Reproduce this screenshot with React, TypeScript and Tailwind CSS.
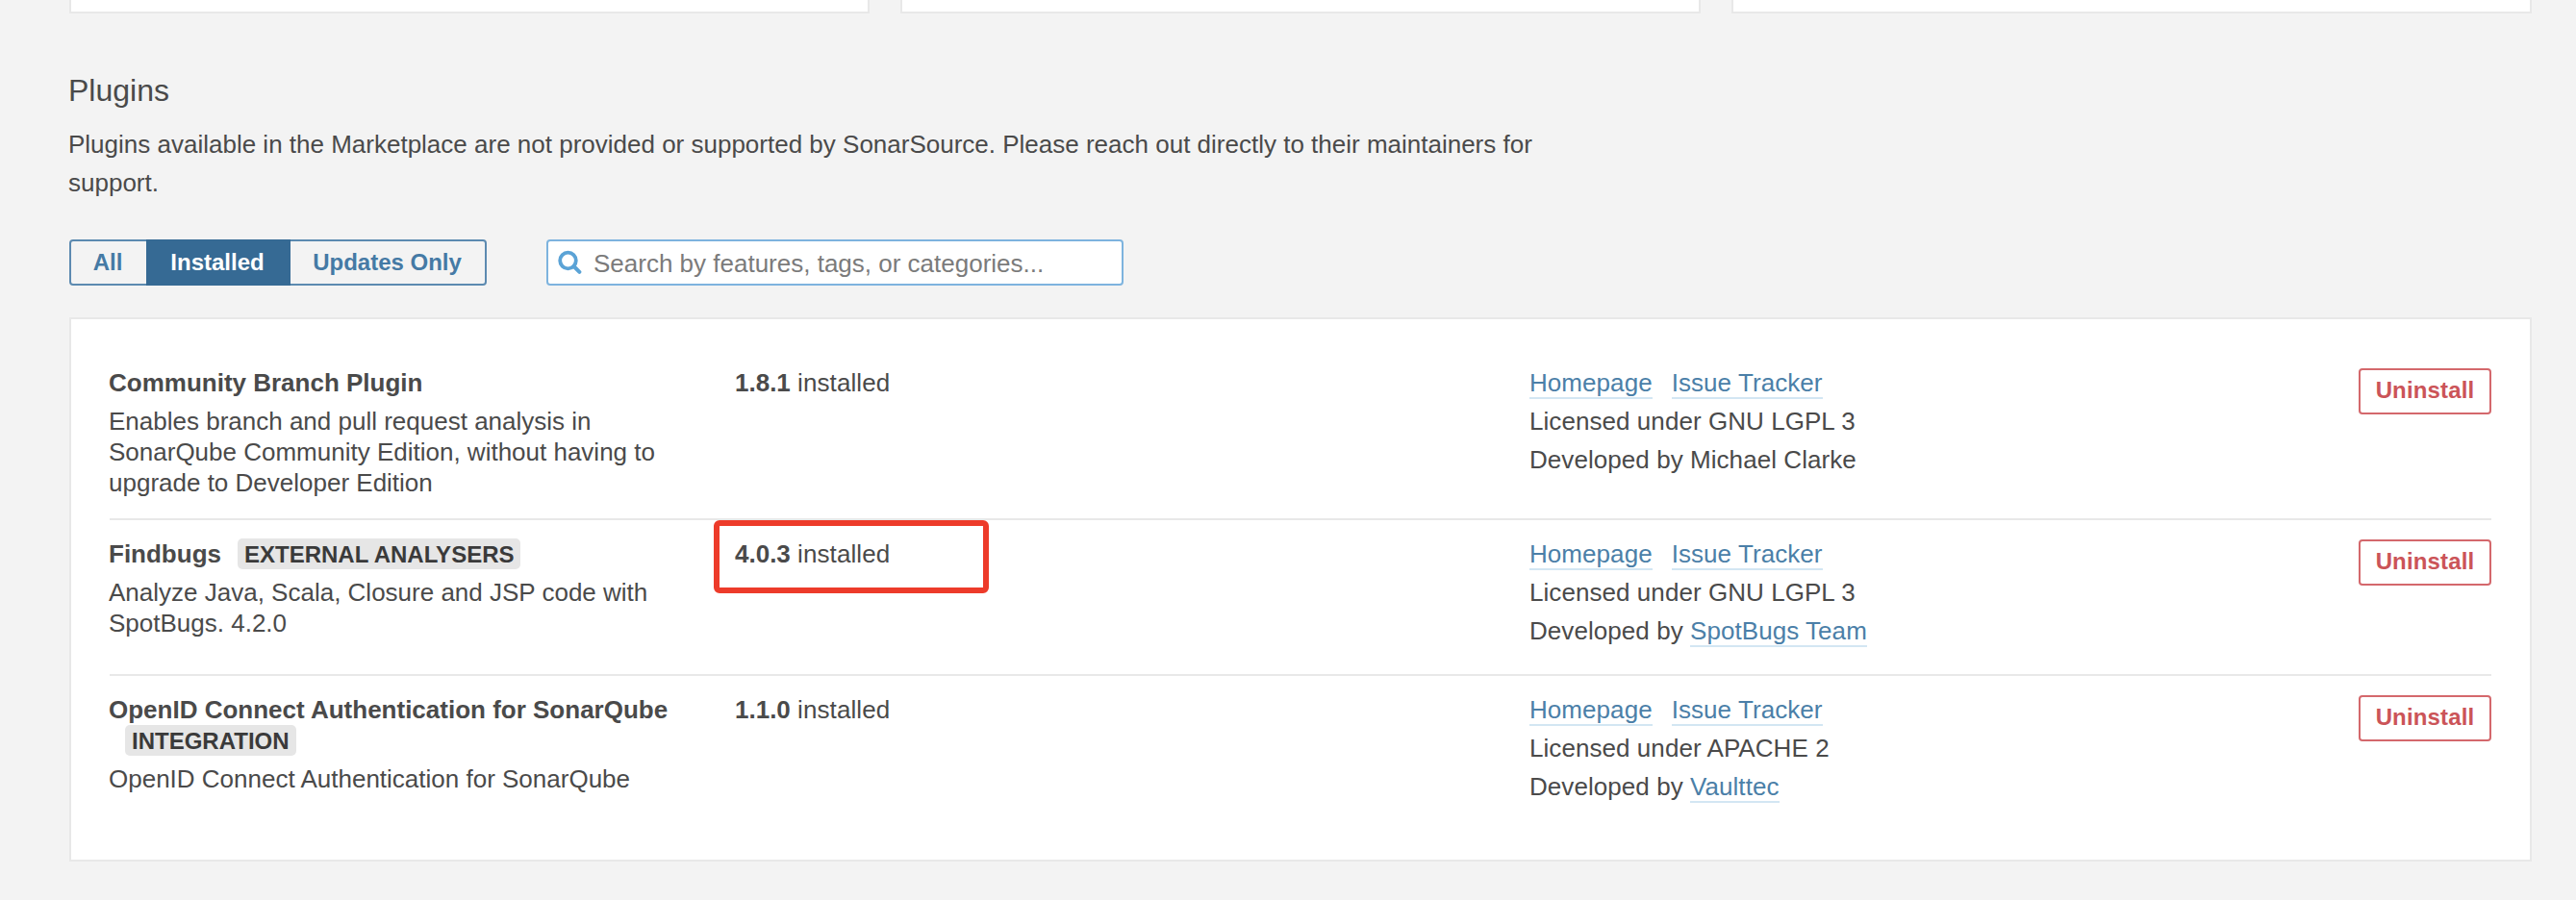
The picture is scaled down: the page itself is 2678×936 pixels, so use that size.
import type { ReactNode } from "react";

type Plugin = {
  name: string;
  category?: string;
  description: string;
  version: string;
  license: string;
  developer: string;
  developerLink?: boolean;
  highlighted?: boolean;
  rowClass: string;
};

const plugins: Plugin[] = [
  {
    name: "Community Branch Plugin",
    description:
      "Enables branch and pull request analysis in SonarQube Community Edition, without having to upgrade to Developer Edition",
    version: "1.8.1",
    license: "GNU LGPL 3",
    developer: "Michael Clarke",
    rowClass: "h-[178px] border-b-2",
  },
  {
    name: "Findbugs",
    category: "EXTERNAL ANALYSERS",
    description: "Analyze Java, Scala, Closure and JSP code with SpotBugs. 4.2.0",
    version: "4.0.3",
    license: "GNU LGPL 3",
    developer: "SpotBugs Team",
    developerLink: true,
    highlighted: true,
    rowClass: "h-[162px] border-b-2",
  },
  {
    name: "OpenID Connect Authentication for SonarQube",
    category: "INTEGRATION",
    description: "OpenID Connect Authentication for SonarQube",
    version: "1.1.0",
    license: "APACHE 2",
    developer: "Vaulttec",
    developerLink: true,
    rowClass: "h-[160px]",
  },
];

function Link({ children }: { children: ReactNode }) {
  return (
    <a href="#" className="border-b-2 border-[#d3e6f3] text-[#4b7fa8]">
      {children}
    </a>
  );
}

function SearchIcon() {
  return (
    <svg className="h-[26px] w-[25px] shrink-0" viewBox="0 0 25 26" fill="none" stroke="#5ba3d6" strokeWidth="3.8">
      <circle cx="10.5" cy="11" r="8.3" />
      <path d="M16.6 17 22.4 22.8" strokeWidth="4" strokeLinecap="round" />
    </svg>
  );
}

function PluginRow({ plugin }: { plugin: Plugin }) {
  return (
    <div className={`flex items-start border-[#e8e8e8] pt-[19px] ${plugin.rowClass}`}>
      <div className="-ml-px w-[651px] shrink-0 leading-[32px]">
        <div className="w-[600px]">
          <strong>{plugin.name}</strong>
          {plugin.category && (
            <span className="ml-[17px] inline-block h-[32px] rounded-[5px] bg-[#e6e6e6] px-[7px] align-top text-[24px] leading-[33px] font-bold text-[#3a3a3a]">
              {plugin.category}
            </span>
          )}
        </div>
        <p className="mt-[8px] w-[590px]">{plugin.description}</p>
      </div>
      <div className="relative w-[826px] shrink-0 leading-[32px]">
        <strong>{plugin.version}</strong> <span className="tracking-[0.1px]">installed</span>
        {plugin.highlighted && (
          <div className="absolute -top-[19px] -left-[22px] h-[76px] w-[286px] rounded-[6px] border-[6px] border-[#ed3b2a]" />
        )}
      </div>
      <div className="-mt-[4px] grow leading-[40px] tracking-[0.06px]">
        <div className="flex gap-[20px]">
          <div><Link>Homepage</Link></div>
          <div><Link>Issue Tracker</Link></div>
        </div>
        <div>Licensed under {plugin.license}</div>
        <div>
          Developed by {plugin.developerLink ? <Link>{plugin.developer}</Link> : plugin.developer}
        </div>
      </div>
      <button className="mt-px h-[48px] w-[138px] rounded-[4px] border-2 border-[#d4686c] pb-[2px] text-center text-[24px] leading-[42px] font-bold tracking-[0.15px] text-[#cb5458]">
        Uninstall
      </button>
    </div>
  );
}

export default function App() {
  return (
    <main className="h-[936px] w-[2678px] overflow-hidden bg-[#f3f3f3] px-[72px] font-['Liberation_Sans',Arial,sans-serif] text-[26px] text-[#4a4a4a]">
      <div className="flex h-[14px] w-[2560px] gap-[32px]">
        <div className="flex-1 border-2 border-t-0 border-[#e8e8e8] bg-white" />
        <div className="flex-1 border-2 border-t-0 border-[#e8e8e8] bg-white" />
        <div className="flex-1 border-2 border-t-0 border-[#e8e8e8] bg-white" />
      </div>
      <h3 className="-ml-px pt-[60px] text-[32px] leading-[40px]">Plugins</h3>
      <p className="mt-[16px] -ml-px w-[1540px] leading-[40px]">
        Plugins available in the Marketplace are not provided or supported by SonarSource. Please reach out directly to
        their maintainers for support.
      </p>
      <div className="mt-[39px] flex h-[48px]">
        <div className="flex rounded-[4px] border-2 border-[#5c8ab0] text-[24px] leading-[42px] font-bold text-[#457aa5]">
          <button className="w-[78px] pr-[2px]">All</button>
          <button className="-my-[2px] w-[150px] bg-[#366a94] pr-[2px] text-white">Installed</button>
          <button className="w-[202px] pr-[1px]">Updates Only</button>
        </div>
        <div className="ml-[62px] flex w-[600px] items-center rounded-[4px] border-2 border-[#7db3de] bg-white pl-[10px] text-[#7b7b7b]">
          <SearchIcon />
          <span className="ml-[12px] pt-px leading-[40px]">Search by features, tags, or categories...</span>
        </div>
      </div>
      <section className="mt-[33px] h-[566px] w-[2560px] border-2 border-[#e8e8e8] bg-white px-[40px] pt-[31px]">
        {plugins.map((plugin) => (
          <PluginRow key={plugin.name} plugin={plugin} />
        ))}
      </section>
    </main>
  );
}
